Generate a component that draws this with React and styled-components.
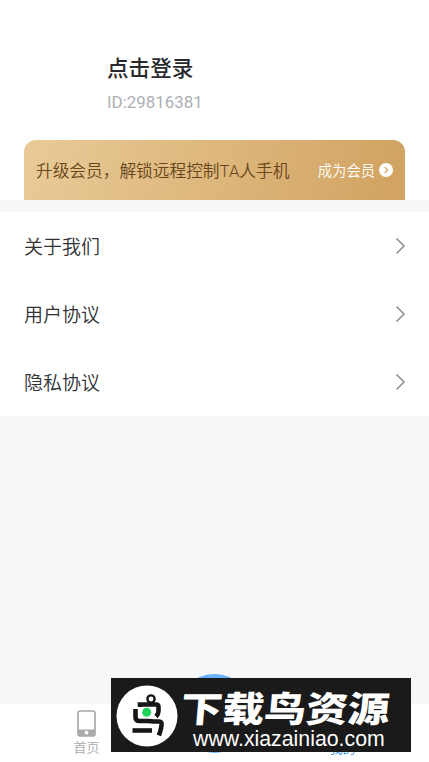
import React from "react";
import styled, { createGlobalStyle } from "styled-components";

const GlobalStyle = createGlobalStyle`
  * { box-sizing: border-box; }
  body {
    margin: 0;
    background-color: #f7f7f7;
    font-family: Roboto, "Noto Sans CJK SC", sans-serif;
    font-weight: 350;
  }
`;

const Page = styled.div`
  position: relative;
  display: flex;
  flex-direction: column;
  height: 762px;
  overflow: hidden;
`;

const Header = styled.header`
  display: flex;
  flex-direction: column;
  height: 200px;
  padding: 53px 24px 0;
  background-color: #fff;
`;

const Profile = styled.div`
  height: 87px;
  padding-left: 83px;
  h1 {
    margin: 0;
    font-size: 21.6px;
    line-height: 32px;
    font-weight: 500;
    color: #28292c;
  }
  p {
    margin: 5px 0 0;
    font-size: 16.9px;
    line-height: 24px;
    font-weight: 400;
    color: #adafb4;
  }
`;

const Vip = styled.div`
  display: flex;
  align-items: center;
  justify-content: space-between;
  height: 60px;
  padding: 0 12px;
  border-radius: 12px 12px 0 0;
  background: linear-gradient(105deg, #e9cb98, #d1a260);
  font-size: 16.7px;
  color: #67461a;
`;

const VipLink = styled.div`
  display: flex;
  align-items: center;
  gap: 4px;
  font-size: 14.3px;
  color: #fff;
  span { padding-bottom: 2px; }
  svg { display: block; }
`;

const Menu = styled.main`
  margin-top: 12px;
  background-color: #fff;
`;

const MenuRow = styled.div`
  display: flex;
  align-items: center;
  justify-content: space-between;
  height: 68px;
  padding: 0 23px 0 24px;
  font-size: 19px;
  color: #303236;
  span { padding-bottom: 2px; }
`;

const TabBar = styled.nav`
  display: grid;
  grid-template-columns: 173px 83px 173px;
  height: 58px;
  margin-top: auto;
  background-color: #fff;
`;

const Tab = styled.div`
  display: flex;
  flex-direction: column;
  align-items: center;
  padding-top: 6px;
  font-size: 13px;
  line-height: 19px;
  color: ${(props) => (props.$active ? "#3295f4" : "#a9a9a9")};
  svg { margin-bottom: ${(props) => (props.$active ? "2px" : "1px")}; }
`;

const MainButton = styled.div`
  width: 79px;
  height: 79px;
  margin-top: -30px;
  justify-self: center;
  border-radius: 50%;
  background-color: #66b3fb;
`;

const Banner = styled.div`
  position: absolute;
  left: 111px;
  top: 678px;
  width: 300px;
  height: 74px;
  display: flex;
  align-items: center;
  padding: 2px 0 0 5px;
  background-color: #1a1a1a;
  color: #fff;
`;

const BannerText = styled.div`
  display: flex;
  flex-direction: column;
  margin-left: 3px;
  padding-top: 5px;
`;

const BannerName = styled.strong`
  font-family: "Noto Sans CJK SC", sans-serif;
  font-size: 41.8px;
  line-height: 40px;
  font-weight: 900;
  white-space: nowrap;
  transform: skewX(-5deg) scaleY(0.85);
`;

const BannerUrl = styled.span`
  margin: 0 0 0 12px;
  font-family: "Liberation Sans", sans-serif;
  font-size: 22px;
  line-height: 24px;
  font-weight: 400;
  transform: scaleX(0.968);
  transform-origin: left;
`;

function Arrow() {
  return (
    <svg width="11" height="18" viewBox="0 0 11 18" fill="none" stroke="#8b8c91" strokeWidth="1.5">
      <path d="M1.500 1.500 9 9l-7.500 7.500" />
    </svg>
  );
}

function PhoneIcon() {
  return (
    <svg width="19" height="27" viewBox="0 0 19 27">
      <rect x="1" y="1" width="17" height="25" rx="2.3" fill="#fff" stroke="#a9a9a9" strokeWidth="1.7" />
      <path d="M1 19.500h17V24q0 2-2 2H3q-2 0-2-2z" fill="#a9a9a9" />
      <circle cx="9.5" cy="22.7" r="1.9" fill="#fff" />
    </svg>
  );
}

function BirdLogo() {
  return (
    <svg width="62" height="62" viewBox="0 0 62 62">
      <circle cx="31" cy="31" r="30.5" fill="#fff" />
      <g fill="none" stroke="#161616" strokeWidth="4.6">
        <circle cx="35" cy="14" r="3.6" strokeWidth="2.4" />
        <path d="M24 22v-2.500h16q2.500 0 2.500 2.500v4q0 3-2.500 5.500" />
        <path d="M19.500 24v8q0 4 4 4h9q3 0 5 .5h5.500q3.200 0 2.500 4-.5 4-2.500 10" />
        <path d="M16.500 45.500h19.500" />
      </g>
      <circle cx="30.700" cy="27.300" r="4.500" fill="#20d45a" />
    </svg>
  );
}

export default function App() {
  return (
    <>
      <GlobalStyle />
      <Page>
        <Header>
          <Profile>
            <h1>点击登录</h1>
            <p>ID:29816381</p>
          </Profile>
          <Vip>
            <span>升级会员，解锁远程控制TA人手机</span>
            <VipLink>
              <span>成为会员</span>
              <svg width="14" height="14" viewBox="0 0 14 14">
                <circle cx="7" cy="7" r="7" fill="#fff" />
                <path d="m5.700 4 3 3-3 3" fill="none" stroke="#d2a566" strokeWidth="1.2" />
              </svg>
            </VipLink>
          </Vip>
        </Header>
        <Menu>
          {["关于我们", "用户协议", "隐私协议"].map((label) => (
            <MenuRow key={label}>
              <span>{label}</span>
              <Arrow />
            </MenuRow>
          ))}
        </Menu>
        <TabBar>
          <Tab>
            <PhoneIcon />
            首页
          </Tab>
          <MainButton />
          <Tab $active>
            <PhoneIcon />
            我的
          </Tab>
        </TabBar>
        <Banner>
          <BirdLogo />
          <BannerText>
            <BannerName>下载鸟资源</BannerName>
            <BannerUrl>www.xiazainiao.com</BannerUrl>
          </BannerText>
        </Banner>
      </Page>
    </>
  );
}
